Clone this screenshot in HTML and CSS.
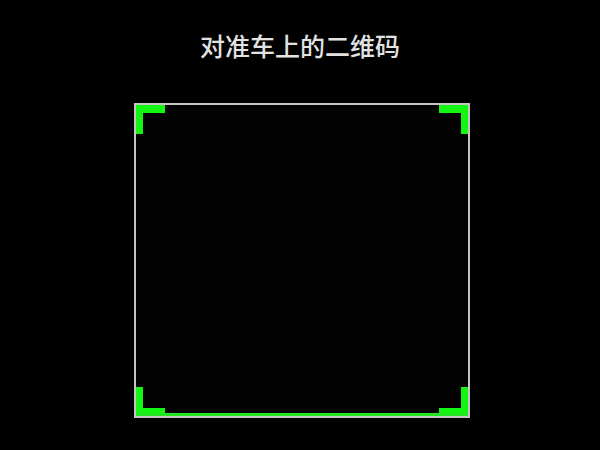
FILE: index.html
```html
<!DOCTYPE html>
<html lang="zh-CN">
<head>
<meta charset="utf-8">
<title>扫码</title>
<link rel="stylesheet" href="styles.css">
</head>
<body>
<div class="screen">
  <h1 class="title">对准车上的二维码</h1>
  <div class="frame">
    <span class="corner tl"></span>
    <span class="corner tr"></span>
    <span class="corner bl"></span>
    <span class="corner br"></span>
    <span class="scanline"></span>
  </div>
</div>
</body>
</html>
```
FILE: styles.css
```css
html, body {
  margin: 0;
  padding: 0;
  background: #000;
}
.screen {
  width: 600px;
  height: 450px;
  background: #000;
  display: flex;
  flex-direction: column;
  overflow: hidden;
}
.title {
  margin: 0;
  padding-top: 28px;
  font-family: "Noto Sans CJK SC", "Noto Sans", sans-serif;
  font-weight: 500;
  font-size: 25px;
  line-height: 35px;
  color: #e2e2e2;
  text-align: center;
}
.frame {
  position: relative;
  box-sizing: border-box;
  width: 336px;
  height: 315px;
  margin-top: 40px;
  margin-left: 134px;
  border: 2px solid #c4c4c4;
  background: #020202;
}
.corner {
  position: absolute;
  width: 29px;
  height: 29px;
  box-sizing: border-box;
  border-color: #14f514;
  border-style: solid;
  border-width: 0;
}
.tl { top: 0; left: 0; border-top-width: 8px; border-left-width: 7px; }
.tr { top: 0; right: 0; border-top-width: 8px; border-right-width: 7px; }
.bl { bottom: 0; left: 0; border-bottom-width: 8px; border-left-width: 7px; }
.br { bottom: 0; right: 0; border-bottom-width: 8px; border-right-width: 7px; }
.scanline {
  position: absolute;
  left: 0;
  right: 0;
  bottom: 0;
  height: 3px;
  background: #22e622;
}
```
